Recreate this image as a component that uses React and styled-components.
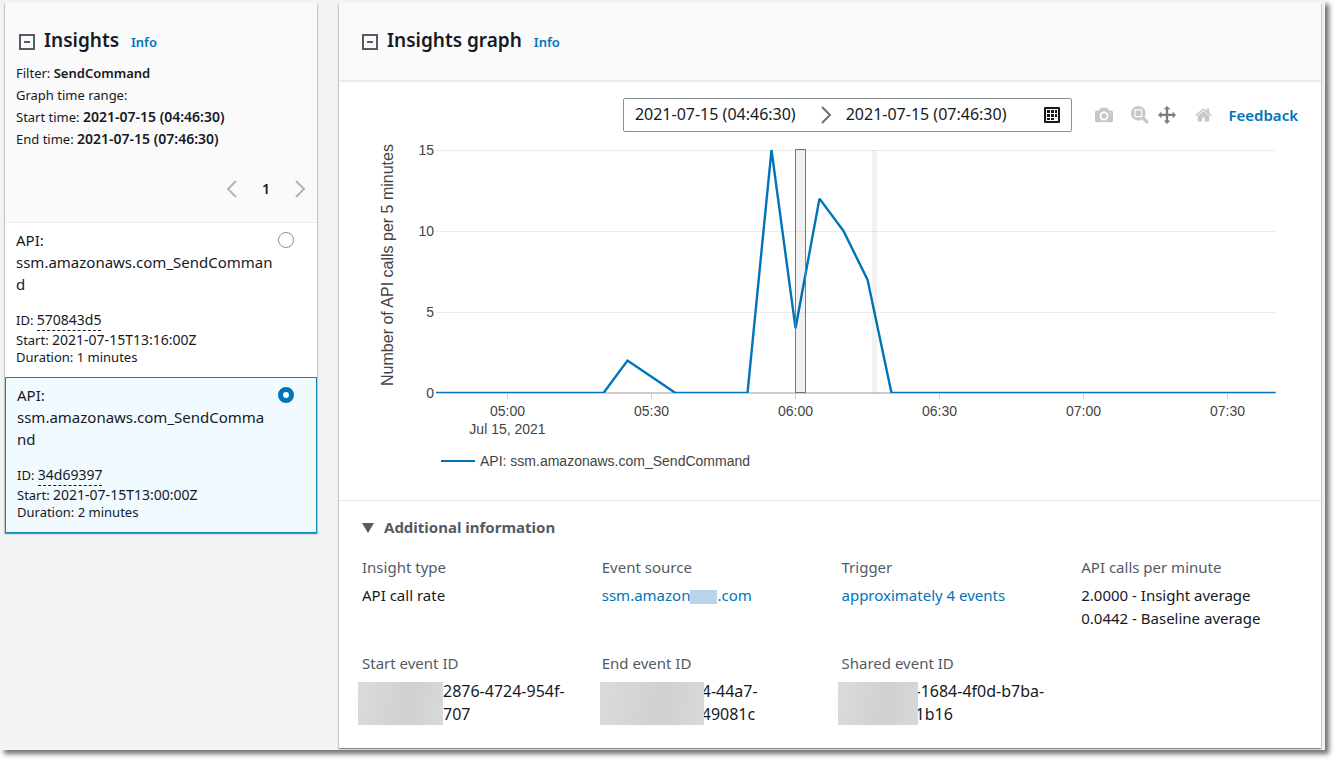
import React, { useState } from "react";
import styled, { createGlobalStyle } from "styled-components";

const GlobalStyle = createGlobalStyle`
  *, *::before, *::after { box-sizing: border-box; }
  body {
    margin: 0;
    background: #fff;
    color: #16191f;
    font-family: "Noto Sans", "Open Sans", sans-serif;
    font-size: 15px;
    line-height: 23px;
  }
  button { font: inherit; color: inherit; }
`;

const Page = styled.main`
  display: grid;
  grid-template-columns: 312px minmax(0, 1fr);
  column-gap: 22px;
  align-items: start;
  margin: 0 15px 15px 0;
  padding: 3px 4px 2px 5px;
  background: #f2f3f3;
  box-shadow: 4px 4px 5px #707070;
`;

const Card = styled.section`
  background: #fff;
  box-shadow: 0 1px 1px rgba(0, 28, 36, 0.3), 1px 1px 1px rgba(0, 28, 36, 0.15),
    -1px 1px 1px rgba(0, 28, 36, 0.15);
`;

const SideHeader = styled.header`
  padding: 25px 11px 20px;
  background: #fafafa;
  border-bottom: 1px solid #eaeded;
`;

const GraphHeader = styled.header`
  padding: 25px 20px;
  background: #fafafa;
  border-bottom: 2px solid #eaeded;
`;

const TitleRow = styled.div`
  display: flex;
  align-items: center;
  height: 27px;
  padding-left: 3px;
`;

const Title = styled.h2`
  display: flex;
  align-items: baseline;
  gap: 12px;
  margin: 0 0 0 9px;
  font-size: 19px;
  font-weight: 600;
  line-height: 27px;
`;

const IconButton = styled.button`
  display: flex;
  padding: 0;
  border: 0;
  background: none;
  color: ${(p) => p.$color || "#545b64"};
  cursor: pointer;
`;

const Link = styled.a`
  color: #0073bb;
  font-size: ${(p) => p.$size || 15}px;
  font-weight: ${(p) => p.$weight || 400};
  text-decoration: none;
`;

const Summary = styled.div`
  margin: 7px 0 0;
  font-size: 13px;
  line-height: 22px;
`;

const Strong = styled.strong`
  font-weight: 600;
`;

const StrongStamp = styled(Strong)`
  font-size: 14px;
`;

const Stamp = styled.span`
  font-size: 14px;
`;

const Pager = styled.nav`
  display: flex;
  justify-content: flex-end;
  align-items: center;
  gap: 22px;
  height: 27px;
  margin-top: 25px;
`;

const PageNumber = styled.span`
  width: 12px;
  font-size: 14px;
  font-weight: 600;
  text-align: center;
`;

const Insight = styled.label`
  display: grid;
  grid-template-columns: minmax(0, 1fr) 16px;
  column-gap: ${(p) => (p.$selected ? 8 : 3)}px;
  padding: ${(p) => (p.$selected ? "6px 22px 11px 11px" : "6px 23px 11px 11px")};
  border: ${(p) => (p.$selected ? "1px solid #0a8bb4" : "0")};
  background: ${(p) => (p.$selected ? "#f1faff" : "#fff")};
  cursor: pointer;
`;

const InsightName = styled.div`
  line-height: 22px;
  overflow-wrap: anywhere;
`;

const InsightMeta = styled.div`
  margin-top: 16px;
  font-size: 13px;
  line-height: 17px;
`;

const InsightId = styled.span`
  display: inline-block;
  padding-bottom: 2px;
  border-bottom: 1px dashed #16191f;
  font-size: 14px;
`;

const Radio = styled.input`
  appearance: none;
  width: 16px;
  height: 16px;
  margin: 3px 0 0;
  border: 1px solid #879596;
  border-radius: 50%;
  background: #fff;
  &:checked { border: 5px solid #0073bb; }
`;

const Toolbar = styled.div`
  display: flex;
  justify-content: flex-end;
  align-items: center;
  padding: 16px 23px 0;
`;

const RangeButton = styled.button`
  display: flex;
  align-items: center;
  gap: 14px;
  height: 34px;
  padding: 0 11px;
  border: 1px solid #879596;
  border-radius: 2px;
  background: #fff;
  font-size: 16px;
  line-height: 22px;
  cursor: pointer;
`;

const RangeDate = styled.span`
  padding-bottom: 2px;
`;

const RangeArrow = styled.span`
  display: flex;
  margin-left: 10px;
  color: #687078;
`;

const CalendarSlot = styled.span`
  display: flex;
  margin-left: 24px;
`;

const ChartTools = styled.div`
  display: flex;
  align-items: center;
  margin: 0 16px 0 23px;
`;

const ToolGroup = styled.div`
  display: flex;
  gap: 9px;
  margin: 0 19px 0 18px;
`;

const Chart = styled.svg`
  display: block;
  width: 100%;
  height: auto;
  margin-bottom: 20px;
  font-family: "Liberation Sans", Arial, sans-serif;
  font-size: 14px;
  fill: #444;
`;

const Details = styled.section`
  padding: 15px 0 22px 23px;
  border-top: 1px solid #eaeded;
`;

const DetailsToggle = styled.button`
  display: flex;
  align-items: center;
  gap: 10px;
  padding: 0;
  border: 0;
  background: none;
  color: #545b64;
  font-weight: 700;
  cursor: pointer;
`;

const Fields = styled.dl`
  display: grid;
  grid-template-columns: repeat(4, minmax(0, 1fr));
  row-gap: 22px;
  margin: 17px 0 0;
`;

const FieldName = styled.dt`
  margin-bottom: 5px;
  color: #545b64;
`;

const FieldValue = styled.dd`
  margin: 0;
`;

const Redacted = styled.span`
  display: inline-block;
  width: 27px;
  height: 14px;
  background: #b8d4ea;
  vertical-align: -3px;
`;

const MaskedValue = styled.div`
  display: flex;
  margin-left: ${(p) => -p.$outset}px;
  font-size: 16px;
`;

const Mask = styled.span`
  z-index: 1;
  width: ${(p) => p.$width}px;
  height: 43px;
  margin: 2px ${(p) => (p.$overlap ? -2 : 0)}px -2px 0;
  background: linear-gradient(100deg, #dadbdc, #cfd0d1 60%, #d8d9da);
`;

function CollapseIcon() {
  return (
    <svg width="16" height="16" viewBox="0 0 16 16" fill="none" stroke="currentColor" strokeWidth="2" aria-hidden="true">
      <path d="M1 1h14v14H1zM5 8h6" />
    </svg>
  );
}

function Chevron({ left }) {
  return (
    <svg width="12" height="18" viewBox="0 0 12 18" fill="none" stroke="currentColor" strokeWidth="2" aria-hidden="true">
      <path d={left ? "M10 1L2 9l8 8" : "M2 1l8 8-8 8"} />
    </svg>
  );
}

function CalendarIcon() {
  return (
    <svg width="16" height="16" viewBox="0 0 16 16" fill="#16191f" aria-hidden="true">
      <rect width="16" height="16" rx="1" />
      <path d="M2 2h12v12H2z" fill="#fff" />
      <path d="M3 3h3v3H3zM7 3h3v3H7zM11 3h2v3h-2zM3 7h3v3H3zM7 7h3v3H7zM11 7h2v3h-2zM3 11h3v2H3zM7 11h3v2H7z" />
    </svg>
  );
}

const TOOL_PATHS = {
  camera:
    "m500 450c-83 0-150-67-150-150 0-83 67-150 150-150 83 0 150 67 150 150 0 83-67 150-150 150z m400 150h-120c-16 0-34 13-39 29l-31 93c-6 15-23 28-40 28h-340c-16 0-34-13-39-28l-31-94c-6-15-23-28-40-28h-120c-55 0-100-45-100-100v-450c0-55 45-100 100-100h800c55 0 100 45 100 100v450c0 55-45 100-100 100z m-400-550c-138 0-250 112-250 250 0 138 112 250 250 250 138 0 250-112 250-250 0-138-112-250-250-250z m365 380c-19 0-35 16-35 35 0 19 16 35 35 35 19 0 35-16 35-35 0-19-16-35-35-35z",
  zoom:
    "m1000-25l-250 251c40 63 63 138 63 218 0 224-182 406-407 406-224 0-406-182-406-406s183-406 407-406c80 0 155 22 218 62l250-250 125 125z m-812 250l0 438 437 0 0-438-437 0z m62 375l313 0 0-312-313 0 0 312z",
  pan:
    "m1000 350l-187 188 0-125-250 0 0 250 125 0-188 187-187-187 125 0 0-250-250 0 0 125-188-188 186-187 0 125 252 0 0-250-125 0 187-188 188 188-125 0 0 250 250 0 0-126 187 188z",
  home:
    "m786 296v-267q0-15-11-26t-25-10h-214v214h-143v-214h-214q-15 0-25 10t-11 26v267q0 1 0 2t0 2l321 264 321-264q1-1 1-4z m124 39l-34-41q-5-5-12-6h-2q-7 0-12 3l-386 322-386-322q-7-4-13-4-7 2-12 7l-35 41q-4 5-3 13t6 12l401 334q18 15 42 15t43-15l136-114v109q0 8 5 13t13 5h107q8 0 13-5t5-13v-227l122-102q5-5 6-12t-4-13z",
};

function Tool({ name, label, active }) {
  const wide = name === "home" ? 928 : 1000;
  return (
    <IconButton type="button" aria-label={label} $color={active ? "#7c7c7c" : "#c7c7c7"}>
      <svg width={name === "home" ? 17 : 18} height="18" viewBox={`0 0 ${wide} 1000`} fill="currentColor" aria-hidden="true">
        <path transform="matrix(1 0 0 -1 0 850)" d={TOOL_PATHS[name]} />
      </svg>
    </IconButton>
  );
}

/* Minutes are counted from 04:45; each point is [minute, calls]. */
const SERIES = [
  [0, 0], [35, 0], [40, 2], [45, 1], [50, 0], [65, 0], [70, 15], [75, 4],
  [80, 12], [85, 10], [90, 7], [95, 0], [175, 0],
];
const TIMES = [[15, "05:00"], [45, "05:30"], [75, "06:00"], [105, "06:30"], [135, "07:00"], [165, "07:30"]];
const px = (minute) => 96.5 + minute * 4.8;
const py = (calls) => 261 - calls * 16.2;

function InsightsChart() {
  return (
    <Chart viewBox="0 0 982 348" role="img" aria-label="API calls per 5 minutes">
      <clipPath id="plot"><rect x="97" y="17" width="840" height="244" /></clipPath>
      <text transform="translate(54 133) rotate(-90)" textAnchor="middle" fontSize="16">
        Number of API calls per 5 minutes
      </text>
      {[0, 5, 10, 15].map((n) => (
        <text key={n} x="95" y={Math.round(py(n)) + 5} textAnchor="end">{n}</text>
      ))}
      {[5, 10, 15].map((n) => (
        <rect key={n} x="97" y={Math.round(py(n))} width="840" height="1" fill="#ececec" />
      ))}
      {TIMES.map(([m, label]) => (
        <g key={label}>
          <rect x={Math.floor(px(m))} y="262" width="1" height="5" fill="#ccc" />
          <text x={px(m)} y="284" textAnchor="middle">{label}</text>
        </g>
      ))}
      <text x={px(15)} y="302" textAnchor="middle">Jul 15, 2021</text>
      <rect x="97" y="260" width="840" height="2" fill="#ccc" />
      <path d={SERIES.map(([m, n], i) => `${i ? "L" : "M"}${px(m)} ${py(n)}`).join("")} clipPath="url(#plot)"
        fill="none" stroke="#0073bb" strokeWidth="2.4" strokeLinejoin="miter" strokeMiterlimit="2" />
      <rect x="456.5" y="17.5" width="10" height="243" fill="#000" fillOpacity="0.05" stroke="#777" />
      <rect x="533" y="18" width="5" height="243" fill="#000" fillOpacity="0.05" />
      <rect x="102" y="328" width="34" height="2" fill="#0073bb" />
      <text x="141" y="334">API: ssm.amazonaws.com_SendCommand</text>
    </Chart>
  );
}

const INSIGHTS = [
  { id: "570843d5", start: "2021-07-15T13:16:00Z", duration: "1 minutes" },
  { id: "34d69397", start: "2021-07-15T13:00:00Z", duration: "2 minutes" },
];

function Field({ name, children }) {
  return (
    <div>
      <FieldName>{name}</FieldName>
      <FieldValue>{children}</FieldValue>
    </div>
  );
}

function MaskedId({ width, outset = 4, overlap, lines }) {
  return (
    <MaskedValue $outset={outset}>
      <Mask $width={width} $overlap={overlap} />
      <span>{lines[0]}<br />{lines[1]}</span>
    </MaskedValue>
  );
}

export default function App() {
  const [selected, setSelected] = useState("34d69397");
  return (
    <>
      <GlobalStyle />
      <Page>
        <Card>
          <SideHeader>
            <TitleRow>
              <IconButton type="button" aria-label="Collapse insights"><CollapseIcon /></IconButton>
              <Title>
                Insights
                <Link href="#info" $size={13} $weight={600}>Info</Link>
              </Title>
            </TitleRow>
            <Summary>
              <div>Filter: <Strong>SendCommand</Strong></div>
              <div>Graph time range:</div>
              <div>Start time: <StrongStamp>2021-07-15 (04:46:30)</StrongStamp></div>
              <div>End time: <StrongStamp>2021-07-15 (07:46:30)</StrongStamp></div>
            </Summary>
            <Pager aria-label="Insight pages">
              <IconButton type="button" aria-label="Previous page" $color="#aab7b8"><Chevron left /></IconButton>
              <PageNumber>1</PageNumber>
              <IconButton type="button" aria-label="Next page" $color="#aab7b8"><Chevron /></IconButton>
            </Pager>
          </SideHeader>
          {INSIGHTS.map((item) => (
            <Insight key={item.id} $selected={item.id === selected}>
              <div>
                <InsightName>API:<br />ssm.amazonaws.com_SendCommand</InsightName>
                <InsightMeta>
                  <div>ID: <InsightId>{item.id}</InsightId></div>
                  <div>Start: <Stamp>{item.start}</Stamp></div>
                  <div>Duration: {item.duration}</div>
                </InsightMeta>
              </div>
              <Radio type="radio" name="insight" checked={item.id === selected} onChange={() => setSelected(item.id)} />
            </Insight>
          ))}
        </Card>
        <Card>
          <GraphHeader>
            <TitleRow>
              <IconButton type="button" aria-label="Collapse graph"><CollapseIcon /></IconButton>
              <Title>
                Insights graph
                <Link href="#graph-info" $size={13} $weight={600}>Info</Link>
              </Title>
            </TitleRow>
          </GraphHeader>
          <Toolbar>
            <RangeButton type="button">
              <RangeDate>2021-07-15 (04:46:30)</RangeDate>
              <RangeArrow><Chevron /></RangeArrow>
              <RangeDate>2021-07-15 (07:46:30)</RangeDate>
              <CalendarSlot><CalendarIcon /></CalendarSlot>
            </RangeButton>
            <ChartTools>
              <Tool name="camera" label="Download plot" />
              <ToolGroup>
                <Tool name="zoom" label="Zoom" />
                <Tool name="pan" label="Pan" active />
              </ToolGroup>
              <Tool name="home" label="Reset axes" />
            </ChartTools>
            <Link href="#feedback" $weight={600}>Feedback</Link>
          </Toolbar>
          <InsightsChart />
          <Details>
            <DetailsToggle type="button" aria-expanded="true">
              <svg width="12" height="10" viewBox="0 0 12 10" fill="currentColor" aria-hidden="true"><path d="M0 0h12L6 10z" /></svg>
              Additional information
            </DetailsToggle>
            <Fields>
              <Field name="Insight type">API call rate</Field>
              <Field name="Event source"><Link href="#source">ssm.amazon<Redacted />.com</Link></Field>
              <Field name="Trigger"><Link href="#trigger">approximately 4 events</Link></Field>
              <Field name="API calls per minute">2.0000 - Insight average<br />0.0442 - Baseline average</Field>
              <Field name="Start event ID"><MaskedId width={85} lines={["2876-4724-954f-", "707"]} /></Field>
              <Field name="End event ID"><MaskedId width={104} outset={2} overlap lines={["4-44a7-", "49081c"]} /></Field>
              <Field name="Shared event ID"><MaskedId width={80} overlap lines={["-1684-4f0d-b7ba-", "1b16"]} /></Field>
            </Fields>
          </Details>
        </Card>
      </Page>
    </>
  );
}
